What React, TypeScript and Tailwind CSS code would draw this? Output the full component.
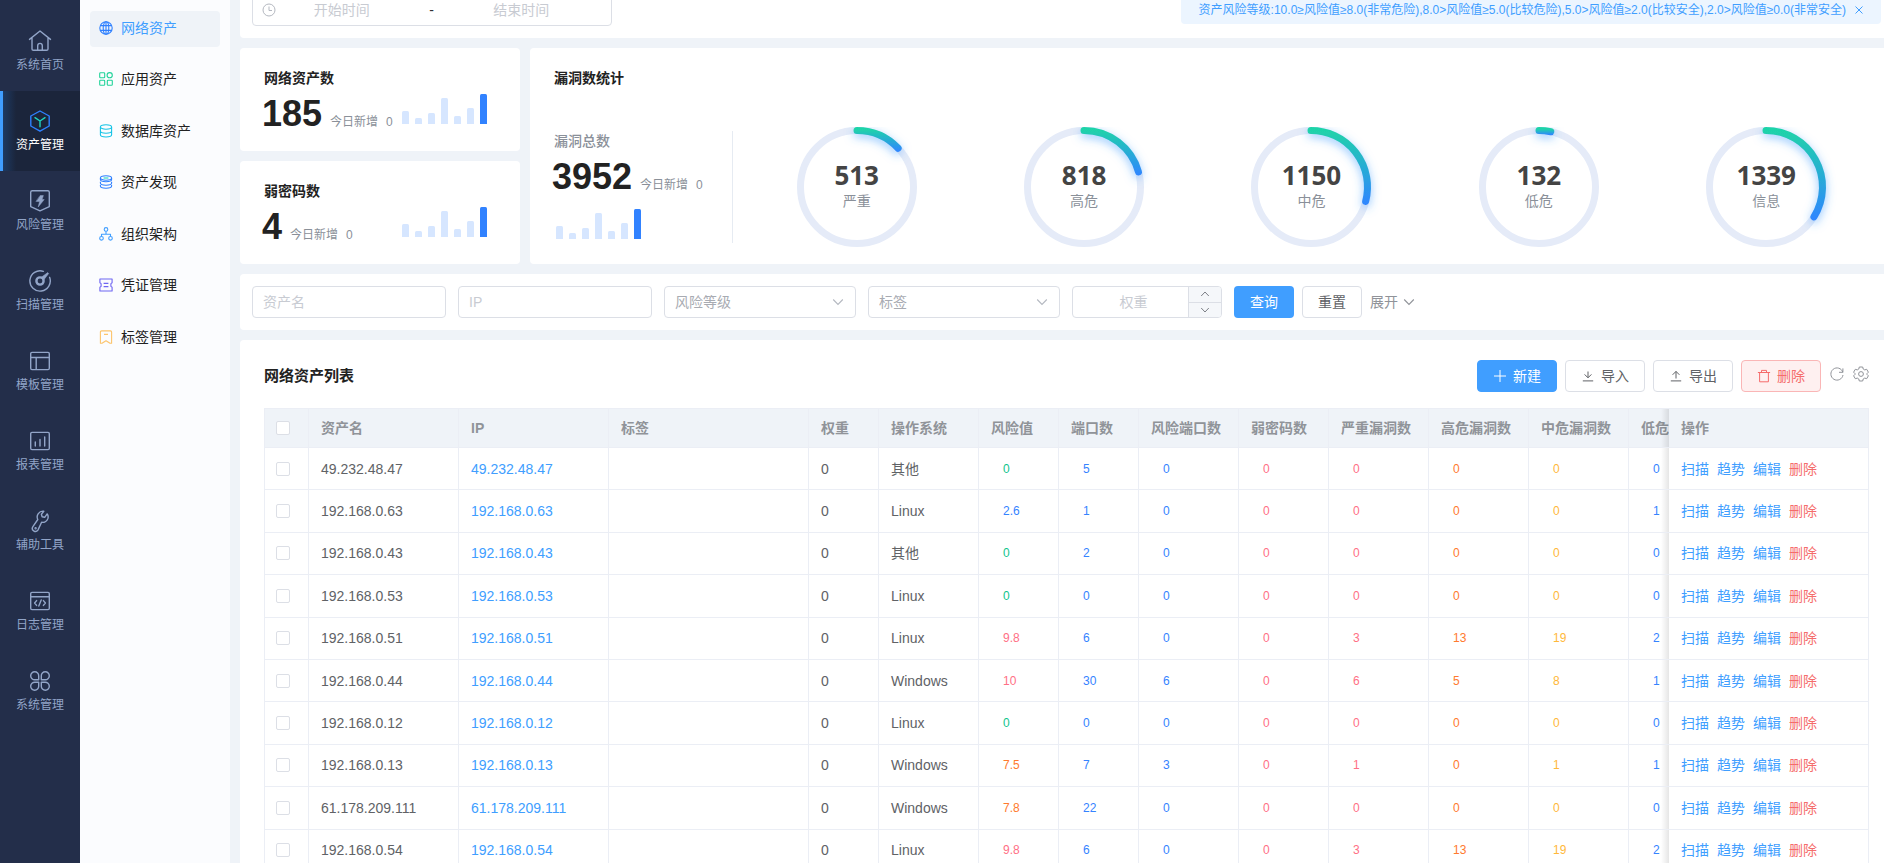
import React, { useState } from 'react';

interface Asset {
  name: string;
  os: string;
  risk: string;
  ports: number;
  riskPorts: number;
  weak: number;
  critical: number;
  high: number;
  medium: number;
  low: number;
}

const assets: Asset[] = [
  { name: '49.232.48.47', os: '其他', risk: '0', ports: 5, riskPorts: 0, weak: 0, critical: 0, high: 0, medium: 0, low: 0 },
  { name: '192.168.0.63', os: 'Linux', risk: '2.6', ports: 1, riskPorts: 0, weak: 0, critical: 0, high: 0, medium: 0, low: 1 },
  { name: '192.168.0.43', os: '其他', risk: '0', ports: 2, riskPorts: 0, weak: 0, critical: 0, high: 0, medium: 0, low: 0 },
  { name: '192.168.0.53', os: 'Linux', risk: '0', ports: 0, riskPorts: 0, weak: 0, critical: 0, high: 0, medium: 0, low: 0 },
  { name: '192.168.0.51', os: 'Linux', risk: '9.8', ports: 6, riskPorts: 0, weak: 0, critical: 3, high: 13, medium: 19, low: 2 },
  { name: '192.168.0.44', os: 'Windows', risk: '10', ports: 30, riskPorts: 6, weak: 0, critical: 6, high: 5, medium: 8, low: 1 },
  { name: '192.168.0.12', os: 'Linux', risk: '0', ports: 0, riskPorts: 0, weak: 0, critical: 0, high: 0, medium: 0, low: 0 },
  { name: '192.168.0.13', os: 'Windows', risk: '7.5', ports: 7, riskPorts: 3, weak: 0, critical: 1, high: 0, medium: 1, low: 1 },
  { name: '61.178.209.111', os: 'Windows', risk: '7.8', ports: 22, riskPorts: 0, weak: 0, critical: 0, high: 0, medium: 0, low: 0 },
  { name: '192.168.0.54', os: 'Linux', risk: '9.8', ports: 6, riskPorts: 0, weak: 0, critical: 3, high: 13, medium: 19, low: 2 },
];

const riskColor = (v: string) => {
  const n = parseFloat(v);
  if (n >= 8) return 'text-[#ff7085]';
  if (n >= 5) return 'text-[#ff7a2e]';
  if (n >= 2) return 'text-[#3583ff]';
  return 'text-[#10c48c]';
};

const mainNav = [
  {
    label: '系统首页',
    icon: <path d="M1.5 10.4 12 2l10.5 8.4M4 8.6v11.3c0 .9.5 1.4 1.4 1.4h13.2c.9 0 1.4-.5 1.4-1.4V8.6M9.7 21v-4.3a2.3 2.3 0 0 1 4.6 0V21" />,
  },
  {
    label: '资产管理',
    icon: (
      <>
        <path d="m12 2 9.2 5v10L12 22.2 2.8 17V7z" stroke="#2f80ff" />
        <path d="m7 8.7 5 3.3 5-3.3M12 12v5.8" stroke="#1fd4c0" />
      </>
    ),
  },
  {
    label: '风险管理',
    icon: (
      <>
        <path d="M4.2 1.8h15.6c.9 0 1.5.6 1.5 1.5v14.3L12 21.8l-9.3-4.2V3.3c0-.9.6-1.5 1.5-1.5z" />
        <path d="M12.4 6.6h3l-1.4 4h2.2l-6 7.4 1.4-5.6H8.3z" fill="currentColor" strokeWidth="0.5" />
      </>
    ),
  },
  {
    label: '扫描管理',
    icon: (
      <>
        <path d="M15.4 2.3A10.2 10.2 0 1 0 21.6 8.3" />
        <circle cx="12" cy="12" r="3.6" strokeWidth="2.4" />
        <path d="M13.4 8.2 19.8 3.6l.8.9-4.7 6.2z" fill="currentColor" strokeWidth="0.6" />
      </>
    ),
  },
  { label: '模板管理', icon: <path d="M4 3.4h16c.8 0 1.3.5 1.3 1.3v14.6c0 .8-.5 1.3-1.3 1.3H4c-.8 0-1.3-.5-1.3-1.3V4.7c0-.8.5-1.3 1.3-1.3zM2.7 8.5h18.6M8.2 8.5v12" /> },
  { label: '报表管理', icon: <path d="M4 3.4h16c.8 0 1.3.5 1.3 1.3v14.6c0 .8-.5 1.3-1.3 1.3H4c-.8 0-1.3-.5-1.3-1.3V4.7c0-.8.5-1.3 1.3-1.3zM7.3 13v4M12 10.4V17M16.7 8v9" /> },
  {
    label: '辅助工具',
    icon: (
      <>
        <path d="M15.8 2.2a5.8 5.8 0 0 0-6 8.3L4.9 17.7a3 3 0 0 0 5 3.4l3.7-7.9c2.6.5 5.4-1 6.3-3.7.5-1.7.2-3.4-.7-4.6l-2.5 3.4-2.6-.5-.7-2.6z" />
        <circle cx="7.6" cy="19.3" r="0.5" />
      </>
    ),
  },
  { label: '日志管理', icon: <path d="M4 3.4h16c.8 0 1.3.5 1.3 1.3v14.6c0 .8-.5 1.3-1.3 1.3H4c-.8 0-1.3-.5-1.3-1.3V4.7c0-.8.5-1.3 1.3-1.3zM2.7 7.8h18.6M8.6 11.6 6.6 14l2 2.4M15.4 11.6l2 2.4-2 2.4M13.2 11l-2.4 6" /> },
  { label: '系统管理', icon: <path d="M10.7 10.8H7A4 4 0 1 1 10.7 7zM13.3 10.8H17A4 4 0 1 0 13.3 7zM10.7 13.3H7a4 4 0 1 0 3.7 3.9zM13.3 13.3H17a4 4 0 1 1-3.7 3.9z" /> },
];

const subNav = [
  {
    label: '网络资产',
    color: 'text-[#2f80ff]',
    icon: (
      <>
        <circle cx="7" cy="7" r="6.2" />
        <ellipse cx="7" cy="7" rx="2.8" ry="6.2" />
        <path d="M7 .8v12.4M1.3 4.6h11.4M1.3 9.4h11.4" />
      </>
    ),
  },
  {
    label: '应用资产',
    color: 'text-[#22d39a]',
    icon: (
      <>
        <rect x="0.7" y="0.7" width="5" height="5" rx="0.8" />
        <circle cx="10.7" cy="3.2" r="2.6" />
        <rect x="0.7" y="8.3" width="5" height="5" rx="0.8" />
        <rect x="8.3" y="8.3" width="5" height="5" rx="0.8" />
      </>
    ),
  },
  {
    label: '数据库资产',
    color: 'text-[#17c4e6]',
    icon: (
      <>
        <ellipse cx="7" cy="3" rx="5.6" ry="2.2" />
        <path d="M1.4 3v7.8C1.4 12 3.9 13 7 13s5.6-1 5.6-2.2V3M1.4 7c0 1.2 2.5 2.2 5.6 2.2s5.6-1 5.6-2.2" />
      </>
    ),
  },
  {
    label: '资产发现',
    color: 'text-[#2f80ff]',
    icon: (
      <>
        <ellipse cx="7" cy="3" rx="5.6" ry="2.2" />
        <path d="M1.4 3v1.6C1.4 5.8 3.9 6.8 7 6.8s5.6-1 5.6-2.2V3M1.4 6.8V8c0 1.2 2.5 2.2 5.6 2.2s5.6-1 5.6-2.2V6.8M1.4 10v1c0 1.2 2.5 2.2 5.6 2.2s5.6-1 5.6-2.2v-1" />
        <path d="M4.6 3h4.8" stroke="#1fd4c0" />
      </>
    ),
  },
  {
    label: '组织架构',
    color: 'text-[#409eff]',
    icon: (
      <>
        <circle cx="7" cy="2.4" r="1.8" />
        <circle cx="2.5" cy="11.3" r="1.8" />
        <circle cx="11.5" cy="11.3" r="1.8" />
        <path d="M7 4.2v3M2.5 9.5V7.2h9v2.3" />
      </>
    ),
  },
  {
    label: '凭证管理',
    color: 'text-[#6f66f2]',
    icon: <path d="M.9 1h12.2v3.8l-1.2.8v2.8l1.2.8V13H.9V9.2l1.2-.8V5.6L.9 4.8zM4.6 5.4h4.8M4.6 8.6h4.8" />,
  },
  {
    label: '标签管理',
    color: 'text-[#fcc46c]',
    icon: <path d="M2.6.9h8.8c.7 0 1.2.5 1.2 1.2v11.1l-1.6.1L7 10.8l-4 2.5-1.6-.1V2.1C1.4 1.4 1.9.9 2.6.9zM5 4.4h4" />,
  },
];

const rings = [
  { value: 513, label: '严重' },
  { value: 818, label: '高危' },
  { value: 1150, label: '中危' },
  { value: 132, label: '低危' },
  { value: 1339, label: '信息' },
];
const TOTAL = 3952;

const ChevronDown = ({ className = '' }: { className?: string }) => (
  <svg viewBox="0 0 12 12" className={`w-3 h-3 ${className}`} fill="none" stroke="currentColor" strokeWidth="1.1">
    <path d="m1.2 3.5 4.8 5 4.8-5" />
  </svg>
);

const BarChart = () => (
  <svg width="85" height="30" viewBox="0 0 85 30" className="shrink-0">
    {[13, 6, 11, 26, 8, 16, 30].map((h, i) => (
      <path
        key={i}
        d={`M${i * 13} 30v-${h - 1.5}q0-1.5 1.5-1.5h4q1.5 0 1.5 1.5v${h - 1.5}z`}
        fill={i === 6 ? '#3182ff' : '#d6e6ff'}
      />
    ))}
  </svg>
);

const Ring = ({ value, label }: { value: number; label: string }) => {
  const r = 56.5;
  const angle = (value / TOTAL) * 2 * Math.PI;
  const ex = 80 + r * Math.sin(angle);
  const ey = 60 - r * Math.cos(angle);
  const id = `ring-${value}`;
  return (
    <div className="relative w-40 h-[120px]">
      <svg width="160" height="120" viewBox="0 0 160 120">
        <defs>
          <linearGradient id={id} gradientUnits="userSpaceOnUse" x1="0" y1="2" x2="0" y2={ey + 3}>
            <stop offset="0" stopColor="#1fd4a8" />
            <stop offset="1" stopColor="#2f86ff" />
          </linearGradient>
          <filter id={`${id}-glow`} filterUnits="userSpaceOnUse" x="0" y="-20" width="160" height="160">
            <feDropShadow dx="0" dy="3" stdDeviation="5" floodColor="#409eff" floodOpacity="0.6" />
          </filter>
        </defs>
        <circle cx="80" cy="60" r={r} fill="none" stroke="#e5ebf8" strokeWidth="7" />
        <path
          d={`M80 3.5A${r} ${r} 0 0 1 ${ex} ${ey}`}
          fill="none"
          stroke={`url(#${id})`}
          strokeWidth="7"
          strokeLinecap="round"
          filter={`url(#${id}-glow)`}
        />
      </svg>
      <div className="absolute inset-0 flex flex-col items-center pt-[34px]">
        <span className="text-[26px] leading-7 font-bold text-[#444] font-['Open_Sans','Noto_Sans_CJK_SC',sans-serif]">{value}</span>
        <span className="mt-0.5 text-sm leading-5 text-[#8a9099]">{label}</span>
      </div>
    </div>
  );
};

const StatNumber = ({ value }: { value: number }) => (
  <div className="flex items-baseline gap-2 text-xs text-[#8a9099]">
    <span className="text-4xl leading-9 font-bold text-[#222]">{value}</span>
    <span>今日新增</span>
    <span>0</span>
  </div>
);

const StatCard = ({ title, value }: { title: string; value: number }) => (
  <section className="h-[103px] bg-white rounded pt-5 pl-[22px] pr-[33px]">
    <h3 className="pl-0.5 text-sm leading-5 font-bold text-[#222]">{title}</h3>
    <div className="mt-1.5 flex items-end justify-between">
      <StatNumber value={value} />
      <div className="pb-2">
        <BarChart />
      </div>
    </div>
  </section>
);

const Check = ({ label }: { label: string }) => (
  <input
    type="checkbox"
    aria-label={label}
    className="block w-3.5 h-3.5 appearance-none bg-white border border-[#dcdfe6] rounded-xs checked:bg-[#409eff] checked:border-[#409eff]"
  />
);

const FilterSelect = ({ label }: { label: string }) => (
  <div className="relative w-48">
    <select aria-label={label} className="w-full h-8 pl-2.5 pr-8 appearance-none bg-white border border-[#dcdfe6] rounded text-[#a8abb2] outline-none">
      <option>{label}</option>
    </select>
    <ChevronDown className="absolute right-3 top-2.5 text-[#b4b8c0] pointer-events-none" />
  </div>
);

const columns: { title: string; width: string }[] = [
  { title: '资产名', width: 'w-[150px]' },
  { title: 'IP', width: 'w-[150px]' },
  { title: '标签', width: 'w-[200px]' },
  { title: '权重', width: 'w-[70px]' },
  { title: '操作系统', width: 'w-[100px]' },
  { title: '风险值', width: 'w-[80px]' },
  { title: '端口数', width: 'w-[80px]' },
  { title: '风险端口数', width: 'w-[100px]' },
  { title: '弱密码数', width: 'w-[90px]' },
  { title: '严重漏洞数', width: 'w-[100px]' },
  { title: '高危漏洞数', width: 'w-[100px]' },
  { title: '中危漏洞数', width: 'w-[100px]' },
];

const cell = 'border-b border-r border-[#ebeef5]';
const stickyShade = "before:content-[''] before:absolute before:inset-y-0 before:-left-2 before:w-2 before:bg-linear-to-l before:from-black/10 before:to-transparent";

const AssetTable = () => (
  <div className="mt-4 border-t border-l border-[#ebeef5] overflow-x-auto">
    <table className="w-full min-w-[1600px] h-[463px] table-fixed border-separate border-spacing-0 text-sm text-[#606266]">
      <thead>
        <tr className="h-[39px] text-left text-[#909399] bg-[#eff3f8]">
          <th className={`w-11 px-3 pl-[11px] ${cell}`}><Check label="全选" /></th>
          {columns.map(c => (
            <th key={c.title} className={`${c.width} px-3 font-bold whitespace-nowrap ${cell}`}>{c.title}</th>
          ))}
          <th className="pl-3 font-bold border-b border-[#ebeef5]">
            <div className="overflow-hidden whitespace-nowrap">低危漏洞数</div>
          </th>
          <th className={`sticky right-0 w-[200px] px-3 font-bold bg-[#eff3f8] ${cell} ${stickyShade}`}>操作</th>
        </tr>
      </thead>
      <tbody>
        {assets.map(a => (
          <tr key={a.name}>
            <td className={`px-3 pl-[11px] ${cell}`}><Check label={a.name} /></td>
            <td className={`px-3 ${cell}`}>{a.name}</td>
            <td className={`px-3 ${cell}`}><a href="#" className="text-[#409eff]">{a.name}</a></td>
            <td className={cell}></td>
            <td className={`px-3 ${cell}`}>0</td>
            <td className={`px-3 ${cell}`}>{a.os}</td>
            <td className={`px-6 text-xs ${riskColor(a.risk)} ${cell}`}>{a.risk}</td>
            <td className={`px-6 text-xs text-[#3583ff] ${cell}`}>{a.ports}</td>
            <td className={`px-6 text-xs text-[#3583ff] ${cell}`}>{a.riskPorts}</td>
            <td className={`px-6 text-xs text-[#ff7085] ${cell}`}>{a.weak}</td>
            <td className={`px-6 text-xs text-[#ff7085] ${cell}`}>{a.critical}</td>
            <td className={`px-6 text-xs text-[#ff7a2e] ${cell}`}>{a.high}</td>
            <td className={`px-6 text-xs text-[#ffb83a] ${cell}`}>{a.medium}</td>
            <td className="pl-6 text-xs text-[#3583ff] border-b border-[#ebeef5]">{a.low}</td>
            <td className={`sticky right-0 px-3 bg-white ${cell} ${stickyShade}`}>
              <div className="flex gap-2 text-[#409eff]">
                <button>扫描</button>
                <button>趋势</button>
                <button>编辑</button>
                <button className="text-[#f56c6c]">删除</button>
              </div>
            </td>
          </tr>
        ))}
      </tbody>
    </table>
  </div>
);

const toolBtn = 'w-20 h-8 flex items-center justify-center gap-1.5 border rounded';

const App: React.FC = () => {
  const [showTip, setShowTip] = useState(true);

  return (
    <div className="flex h-screen overflow-hidden bg-[#eff3f8] text-sm font-['Liberation_Sans','Noto_Sans_CJK_SC',sans-serif]">
      <nav className="w-20 shrink-0 pt-[11px] bg-[#232e4a]">
        {mainNav.map((item, i) => (
          <a
            key={item.label}
            href="#"
            className={`flex flex-col items-center h-20 pt-[18px] ${i === 1
              ? 'text-white bg-[#1b253b] bg-[linear-gradient(to_right,#409eff_3px,#1d3a63_3px,#1b253b_16px)]'
              : 'text-[#92a5c8]'}`}
          >
            <svg viewBox="0 0 24 24" className="w-6 h-6" fill="none" stroke="currentColor" strokeWidth="1.4" strokeLinejoin="round" strokeLinecap="round">
              {item.icon}
            </svg>
            <span className="mt-1 text-xs leading-4">{item.label}</span>
          </a>
        ))}
      </nav>

      <aside className="w-[150px] shrink-0 px-2.5 pt-[11px] bg-[#fbfcfe]">
        <div className="flex flex-col justify-between h-[345px]">
          {subNav.map((item, i) => (
            <a
              key={item.label}
              href="#"
              className={`flex items-center h-9 pl-[9px] pb-[3px] gap-2 rounded ${i === 0 ? 'bg-[#eff3f8] text-[#409eff]' : 'text-[#222]'}`}
            >
              <svg viewBox="0 0 14 14" className={`w-3.5 h-3.5 ${item.color}`} fill="none" stroke="currentColor" strokeWidth="1.1" strokeLinejoin="round">
                {item.icon}
              </svg>
              {item.label}
            </a>
          ))}
        </div>
      </aside>

      <main className="flex-1 min-w-0 flex flex-col gap-2.5 pl-2.5 -mt-[18px]">
        <section className="flex items-center justify-between h-14 shrink-0 bg-white rounded-l pl-3 pr-[3px]">
          <div className="flex items-center w-[360px] h-8 pl-[9px] pr-6 border border-[#dcdfe6] rounded">
            <svg viewBox="0 0 14 14" className="w-3.5 h-3.5 shrink-0 text-[#b4b8c0]" fill="none" stroke="currentColor">
              <circle cx="7" cy="7" r="6" />
              <path d="M7 3.5V7.5h3" />
            </svg>
            <input aria-label="开始时间" placeholder="开始时间" className="flex-1 min-w-0 text-center outline-none placeholder:text-[#c8cbd2]" />
            <span className="w-12 text-center text-[#303133]">-</span>
            <input aria-label="结束时间" placeholder="结束时间" className="flex-1 min-w-0 text-center outline-none placeholder:text-[#c8cbd2]" />
          </div>
          {showTip && (
            <div className="flex items-center h-7 pl-[18px] pr-[17px] gap-2 bg-[#ecf5ff] rounded text-xs text-[#409eff]">
              <span>资产风险等级:10.0≥风险值≥8.0(非常危险),8.0&gt;风险值≥5.0(比较危险),5.0&gt;风险值≥2.0(比较安全),2.0&gt;风险值≥0.0(非常安全)</span>
              <button aria-label="关闭" onClick={() => setShowTip(false)}>
                <svg viewBox="0 0 10 10" className="w-2.5 h-2.5" stroke="currentColor"><path d="m1.5 1.5 7 7M8.5 1.5l-7 7" /></svg>
              </button>
            </div>
          )}
        </section>

        <div className="flex gap-2.5 shrink-0">
          <div className="w-[280px] shrink-0 flex flex-col gap-2.5">
            <StatCard title="网络资产数" value={185} />
            <StatCard title="弱密码数" value={4} />
          </div>

          <section className="flex-1 min-w-0 h-[216px] bg-white rounded-l pt-5 pl-[22px]">
            <h3 className="pl-0.5 text-sm leading-5 font-bold text-[#222]">漏洞数统计</h3>
            <div className="flex mt-[39px]">
              <div className="w-[180px] h-[116px] flex flex-col shrink-0">
                <span className="pl-0.5 pt-1 leading-5 font-medium text-[#8a9099]">漏洞总数</span>
                <div className="mt-2">
                  <StatNumber value={TOTAL} />
                </div>
                <div className="mt-3.5 pl-1">
                  <BarChart />
                </div>
              </div>
              <div className="w-px h-28 mt-1 bg-[#e6ebf2]"></div>
              <div className="flex-1 flex justify-around ml-2.5 mr-1">
                {rings.map(r => <Ring key={r.label} {...r} />)}
              </div>
            </div>
          </section>
        </div>

        <form className="flex items-center gap-3 h-14 shrink-0 bg-white rounded-l px-3" onSubmit={e => e.preventDefault()}>
          <input aria-label="资产名" placeholder="资产名" className="w-[194px] h-8 px-2.5 border border-[#dcdfe6] rounded outline-none placeholder:text-[#c8cbd2]" />
          <input aria-label="IP" placeholder="IP" className="w-[194px] h-8 px-2.5 border border-[#dcdfe6] rounded outline-none placeholder:text-[#c8cbd2]" />
          <FilterSelect label="风险等级" />
          <FilterSelect label="标签" />
          <div className="flex w-[150px] h-8 border border-[#dcdfe6] rounded overflow-hidden">
            <input aria-label="权重" placeholder="权重" className="flex-1 min-w-0 pl-1.5 text-center outline-none placeholder:text-[#c8cbd2]" />
            <div className="w-[33px] flex flex-col border-l border-[#dcdfe6] bg-[#f5f7fa] text-[#7d8087]">
              <button type="button" aria-label="增加" className="flex-1 flex items-center justify-center border-b border-[#dcdfe6]">
                <svg viewBox="0 0 10 10" className="w-2.5 h-2.5" fill="none" stroke="currentColor"><path d="m1.2 7 3.8-4 3.8 4" /></svg>
              </button>
              <button type="button" aria-label="减少" className="flex-1 flex items-center justify-center">
                <svg viewBox="0 0 10 10" className="w-2.5 h-2.5" fill="none" stroke="currentColor"><path d="m1.2 3 3.8 4 3.8-4" /></svg>
              </button>
            </div>
          </div>
          <div className="flex items-center gap-2">
            <button type="submit" className="w-[60px] h-8 bg-[#409eff] rounded text-white">查询</button>
            <button type="reset" className="w-[60px] h-8 border border-[#dcdfe6] rounded text-[#606266]">重置</button>
            <button type="button" className="flex items-center gap-[5px] text-[#909399]">
              展开
              <ChevronDown />
            </button>
          </div>
        </form>

        <section className="flex-1 bg-white rounded-tl pt-5 pl-6 pr-[15px]">
          <div className="flex items-center justify-between h-8">
            <h2 className="text-[15px] font-bold text-[#222]">网络资产列表</h2>
            <div className="flex items-center gap-2">
              <button className={`${toolBtn} bg-[#409eff] border-[#409eff] text-white`}>
                <svg viewBox="0 0 14 14" className="w-3.5 h-3.5" stroke="currentColor"><path d="M7 1v12M1 7h12" /></svg>
                新建
              </button>
              <button className={`${toolBtn} border-[#dcdfe6] text-[#606266]`}>
                <svg viewBox="0 0 14 14" className="w-3.5 h-3.5" fill="none" stroke="currentColor"><path d="M7 2.5v6.2M3.6 5.4 7 8.8l3.4-3.4M1.8 11.9h10.4" /></svg>
                导入
              </button>
              <button className={`${toolBtn} border-[#dcdfe6] text-[#606266]`}>
                <svg viewBox="0 0 14 14" className="w-3.5 h-3.5" fill="none" stroke="currentColor"><path d="M7 9.5V2.4M3.6 5.8 7 2.4l3.4 3.4M1.8 11.9h10.4" /></svg>
                导出
              </button>
              <button className={`${toolBtn} bg-[#fef0f0] border-[#fab6b6] text-[#f56c6c]`}>
                <svg viewBox="0 0 14 14" className="w-3.5 h-3.5" fill="none" stroke="currentColor"><path d="M.9 3.5h12.2M4.5 3.2V1.4h5v1.8M2.6 3.8v9h8.8v-9" /></svg>
                删除
              </button>
              <button aria-label="刷新" className="ml-px pb-1 text-[#909399]">
                <svg viewBox="0 0 14 14" className="w-3.5 h-3.5" fill="none" stroke="currentColor"><path d="M12.8 5.2A6.1 6.1 0 1 0 13 8M12.9 1.4v3.9H9" /></svg>
              </button>
              <button aria-label="设置" className="ml-px pb-1 text-[#909399]">
                <svg viewBox="0 0 16 16" className="w-4 h-4" fill="none" stroke="currentColor" strokeLinejoin="round">
                  <path d="M6.3 1h3.4l.5 2 1.5.9 2-.6 1.7 2.9-1.5 1.5v.6l1.5 1.5-1.7 2.9-2-.6-1.5.9-.5 2H6.3l-.5-2-1.5-.9-2 .6L.6 9.8l1.5-1.5v-.6L.6 6.2l1.7-2.9 2 .6L5.8 3z" />
                  <circle cx="8" cy="8" r="2.4" />
                </svg>
              </button>
            </div>
          </div>
          <AssetTable />
        </section>
      </main>
    </div>
  );
};

export default App;
